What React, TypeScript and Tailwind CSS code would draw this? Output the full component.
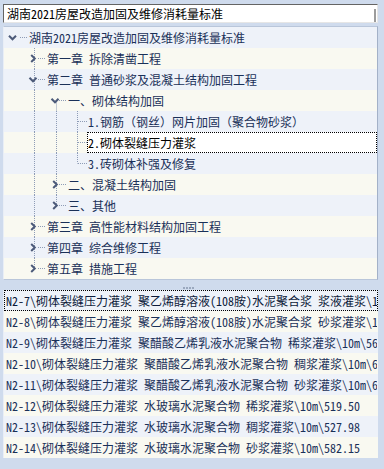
import React from "react";

type Guide = { x: number; kind: "full" | "top" | "bottom" };
type TreeRow = {
  text: string;
  textX: number;
  toggle?: { dir: "down" | "right"; cx: number };
  hline: [number, number];
  guides: Guide[];
  selected?: boolean;
  leaf?: boolean;
};

const ROW_H = 21;
const OFF = 4;

const rows: TreeRow[] = [
  { text: "湖南2021房屋改造加固及维修消耗量标准", textX: 29, toggle: { dir: "down", cx: 12.5 }, hline: [20, 28], guides: [] },
  { text: "第一章 拆除清凿工程", textX: 47, toggle: { dir: "right", cx: 33 }, hline: [38, 46], guides: [{ x: 34, kind: "full" }] },
  { text: "第二章 普通砂浆及混凝土结构加固工程", textX: 47, toggle: { dir: "down", cx: 33 }, hline: [38, 46], guides: [{ x: 34, kind: "full" }] },
  { text: "一、砌体结构加固", textX: 68, toggle: { dir: "down", cx: 55 }, hline: [59, 67], guides: [{ x: 34, kind: "full" }, { x: 56, kind: "bottom" }] },
  { text: "1.钢筋（钢丝）网片加固（聚合物砂浆）", textX: 87, leaf: true, hline: [78, 87], guides: [{ x: 34, kind: "full" }, { x: 56, kind: "full" }, { x: 77, kind: "full" }] },
  { text: "2.砌体裂缝压力灌浆", textX: 87, leaf: true, selected: true, hline: [78, 87], guides: [{ x: 34, kind: "full" }, { x: 56, kind: "full" }, { x: 77, kind: "full" }] },
  { text: "3.砖砌体补强及修复", textX: 87, leaf: true, hline: [78, 87], guides: [{ x: 34, kind: "full" }, { x: 56, kind: "full" }, { x: 77, kind: "top" }] },
  { text: "二、混凝土结构加固", textX: 68, toggle: { dir: "right", cx: 55 }, hline: [59, 67], guides: [{ x: 34, kind: "full" }, { x: 56, kind: "full" }] },
  { text: "三、其他", textX: 68, toggle: { dir: "right", cx: 55 }, hline: [59, 67], guides: [{ x: 34, kind: "full" }, { x: 56, kind: "top" }] },
  { text: "第三章 高性能材料结构加固工程", textX: 47, toggle: { dir: "right", cx: 33 }, hline: [38, 46], guides: [{ x: 34, kind: "full" }] },
  { text: "第四章 综合维修工程", textX: 47, toggle: { dir: "right", cx: 33 }, hline: [38, 46], guides: [{ x: 34, kind: "full" }] },
  { text: "第五章 措施工程", textX: 47, toggle: { dir: "right", cx: 33 }, hline: [38, 46], guides: [{ x: 34, kind: "top" }] },
];

const listRows = [
  "N2-7\\砌体裂缝压力灌浆 聚乙烯醇溶液(108胺)水泥聚合浆 浆液灌浆\\10m\\612.40",
  "N2-8\\砌体裂缝压力灌浆 聚乙烯醇溶液(108胺)水泥聚合浆 砂浆灌浆\\10m\\655.72",
  "N2-9\\砌体裂缝压力灌浆 聚醋酸乙烯乳液水泥聚合物 稀浆灌浆\\10m\\563.18",
  "N2-10\\砌体裂缝压力灌浆 聚醋酸乙烯乳液水泥聚合物 稠浆灌浆\\10m\\604.26",
  "N2-11\\砌体裂缝压力灌浆 聚醋酸乙烯乳液水泥聚合物 砂浆灌浆\\10m\\648.93",
  "N2-12\\砌体裂缝压力灌浆 水玻璃水泥聚合物 稀浆灌浆\\10m\\519.50",
  "N2-13\\砌体裂缝压力灌浆 水玻璃水泥聚合物 稠浆灌浆\\10m\\527.98",
  "N2-14\\砌体裂缝压力灌浆 水玻璃水泥聚合物 砂浆灌浆\\10m\\582.15",
];

const DOT = "#8e9cb6";
const CHEV = "#4c5a79";

function RowGraphic({ row, width }: { row: TreeRow; width: number }) {
  const cy = 10.5;
  return (
    <svg width={width} height={ROW_H} className="shrink-0 block">
      {row.guides.map((g, i) => {
        const x = g.x - OFF + 0.5;
        const y1 = g.kind === "bottom" ? cy : 0;
        const y2 = g.kind === "top" ? cy : ROW_H;
        return <line key={i} x1={x} x2={x} y1={y1} y2={y2} stroke={DOT} strokeWidth={1} strokeDasharray="1 1" />;
      })}
      <line x1={row.hline[0] - OFF} x2={row.hline[1] - OFF} y1={cy} y2={cy} stroke={DOT} strokeWidth={1} strokeDasharray="1 1" />
      {row.toggle && row.toggle.dir === "down" && (
        <g transform={`translate(${row.toggle.cx - OFF}, ${cy})`}>
          <polyline points="-3.5,-1.8 0,1.8 3.5,-1.8" fill="none" stroke={CHEV} strokeWidth={2} />
        </g>
      )}
      {row.toggle && row.toggle.dir === "right" && (
        <g transform={`translate(${row.toggle.cx - OFF}, ${cy})`}>
          <polyline points="-1.8,-3.5 1.8,0 -1.8,3.5" fill="none" stroke={CHEV} strokeWidth={2} />
        </g>
      )}
    </svg>
  );
}

export default function App() {
  return (
    <div className="w-[384px] h-[469px] bg-[#cfdbed] flex flex-col overflow-hidden [font-family:'Noto_Sans_Mono_CJK_SC','Noto_Sans_CJK_SC','Liberation_Mono',monospace] text-[12px] leading-none">
      {/* top input */}
      <div className="pt-[4px] pl-[3px]">
        <div className="w-[375px] h-[19px] bg-white border-t border-l border-t-[#646464] border-l-[#646464] border-b border-r border-b-[#e6e6e6] border-r-[#e6e6e6] flex items-center">
          <span className="pl-[3px] text-black flex-1 whitespace-nowrap leading-[16px]">湖南2021房屋改造加固及维修消耗量标准</span>
          <div className="w-[2px] h-[13px] self-end bg-[#9c9c9c] mr-[1px]" />
        </div>
      </div>

      {/* tree panel */}
      <div className="mt-[3px] ml-[3px] w-[375px] h-[254px] border border-l-[#e9eef6] border-t-[#b9c6da] border-b-[#b9c6da] border-r-[#a3b1c8] overflow-hidden">
        {rows.map((row, i) => {
          const bg = i % 2 === 0 ? "bg-[#eef2f9]" : "bg-[#f9f9f1]";
          const gw = row.textX - OFF;
          return (
            <div key={i} className={`flex items-center h-[21px] ${bg} text-[#1a3058] whitespace-nowrap`}>
              <RowGraphic row={row} width={gw} />
              {row.selected ? (
                <div className="flex-1 h-[21px] flex items-center bg-white border border-dotted border-black text-black">
                  <span>{row.text}</span>
                </div>
              ) : (
                <div className={`flex-1 h-[21px] flex items-center ${row.leaf ? "border border-transparent" : ""}`}>
                  <span>{row.text}</span>
                </div>
              )}
            </div>
          );
        })}
      </div>

      {/* splitter */}
      <div className="h-[10px] flex items-end justify-center pb-[1px]">
        <div className="flex gap-[1px] mr-[8px]">
          <div className="w-[2px] h-[2px] bg-[#9aa8be]" />
          <div className="w-[2px] h-[2px] bg-[#9aa8be]" />
          <div className="w-[2px] h-[2px] bg-[#9aa8be]" />
          <div className="w-[2px] h-[2px] bg-[#9aa8be]" />
        </div>
      </div>

      {/* list */}
      <div className="ml-[3px] w-[375px] flex flex-col border-l border-l-[#e9eef6]">
        {listRows.map((t, i) => {
          const bg = i % 2 === 0 ? "bg-[#eef2f9]" : "bg-[#f9f9f1]";
          return (
            <div
              key={i}
              className={`h-[21px] flex items-center overflow-hidden whitespace-nowrap ${bg} ${
                i === 0 ? "border border-dotted border-black text-[#0c1a3a]" : "border border-transparent text-[#1a3058]"
              }`}
            >
              <span className="pl-[1px]">{t}</span>
            </div>
          );
        })}
      </div>
    </div>
  );
}
